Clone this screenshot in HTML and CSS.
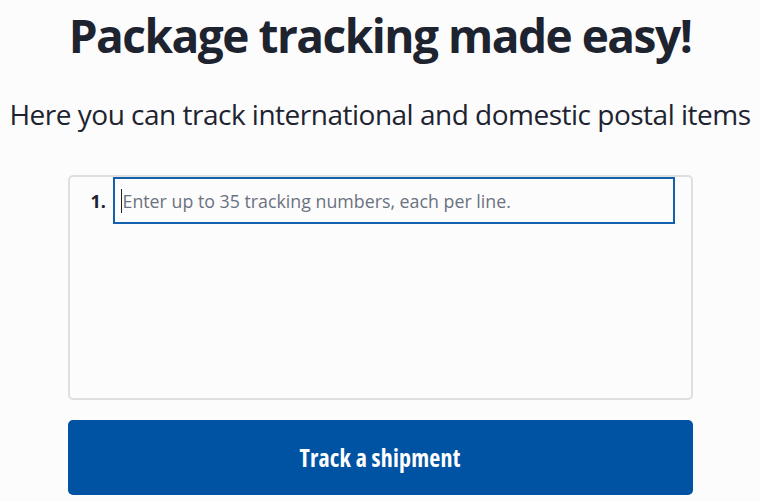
FILE: index.html
```html
<!DOCTYPE html>
<html lang="en">
<head>
<meta charset="utf-8">
<title>Package tracking</title>
<link rel="stylesheet" href="styles.css">
</head>
<body>
<main class="page">
  <h1 class="title">Package tracking made easy!</h1>
  <p class="subtitle">Here you can track international and domestic postal items</p>
  <form class="tracker">
    <div class="box">
      <div class="line">
        <span class="num">1.</span>
        <div class="input"><span class="caret"></span><span class="placeholder">Enter up to 35 tracking numbers, each per line.</span></div>
      </div>
    </div>
    <button type="button" class="btn">Track a shipment</button>
  </form>
</main>
</body>
</html>
```

FILE: styles.css
```css
html, body {
  margin: 0;
  padding: 0;
  background: #fcfcfc;
}
body {
  font-family: "Open Sans", "Noto Sans", sans-serif;
  color: #1e2330;
  width: 760px;
  height: 501px;
  overflow: hidden;
}
.page {
  display: flex;
  flex-direction: column;
  align-items: center;
}
.title {
  margin: 6px 0 0;
  font-size: 46px;
  line-height: 58px;
  font-weight: 700;
  font-stretch: 100%;
  white-space: nowrap;
  letter-spacing: -1.5px;
}
.subtitle {
  margin: 32px 0 0;
  font-size: 28px;
  line-height: 36px;
  font-weight: 400;
  font-stretch: 100%;
  white-space: nowrap;
  letter-spacing: -0.5px;
}
.tracker {
  width: 625px;
  margin-top: 43px;
  display: flex;
  flex-direction: column;
  gap: 20px;
}
.box {
  height: 225px;
  box-sizing: border-box;
  border: 2px solid #dfdfdf;
  border-radius: 5px;
  background: #fcfcfc;
}
.line {
  display: flex;
  align-items: center;
  padding: 0 16px 0 21px;
}
.num {
  font-family: "Noto Sans", sans-serif;
  font-weight: 700;
  font-size: 18px;
  width: 22px;
  color: #1e2330;
}
.input {
  flex: 1;
  height: 47px;
  box-sizing: border-box;
  border: 2px solid #1460ad;
  display: flex;
  align-items: center;
  padding-left: 6px;
}
.caret {
  width: 1px;
  height: 24px;
  background: #222;
  margin-right: 1px;
}
.placeholder {
  font-family: "Open Sans", sans-serif;
  font-size: 17.8px;
  color: #6b7280;
}
.btn {
  height: 75px;
  border: none;
  border-radius: 5px;
  background: #0052a2;
  color: #fff;
  font-family: "Open Sans", sans-serif;
  font-size: 24px;
  font-weight: 700;
  font-stretch: 75%;
  letter-spacing: 0.2px;
  cursor: pointer;
}
```
